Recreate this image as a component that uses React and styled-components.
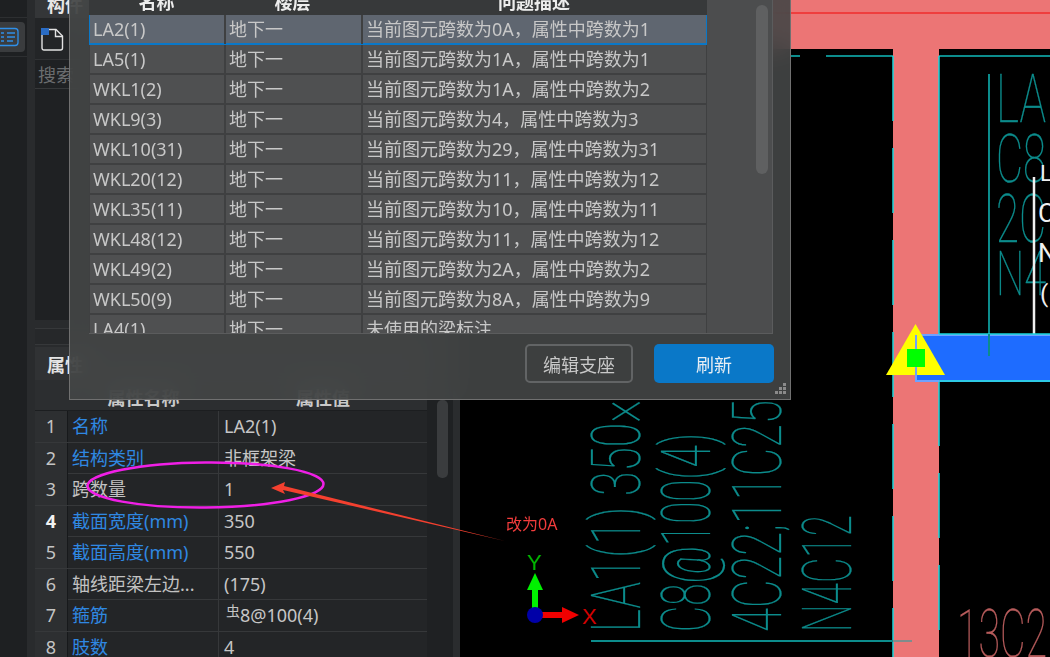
import React from 'react';
import styled, { createGlobalStyle } from 'styled-components';

const GlobalStyle = createGlobalStyle`
  html, body {
    margin: 0;
    padding: 0;
    background: #000;
  }
  body {
    font-family: "Noto Sans", "Noto Sans CJK SC", sans-serif;
    overflow: hidden;
  }
`;

const Screen = styled.div`
  position: relative;
  width: 1050px;
  height: 657px;
  overflow: hidden;
  display: flex;
  background: #000;
  filter: blur(0.4px);
`;

const Rail = styled.div`
  width: 27px;
  flex: none;
  background: #1e2022;
  border-right: 8px solid #292b2d;
  padding-top: 17px;
`;

const RailTile = styled.div`
  height: 38px;
  border-top: 1px solid #2d2f31;
  border-bottom: 1px solid #2d2f31;
  display: flex;
  align-items: center;
`;

const RailButton = styled.div`
  width: 25px;
  height: 30px;
  background: #3a3c3e;
  border-radius: 0 4px 4px 0;
  display: flex;
  align-items: center;
  color: #2f8fe8;
`;

const SideColumn = styled.div`
  width: 392px;
  flex: none;
  display: flex;
  flex-direction: column;
  background: #292b2d;
`;

const ComponentPanel = styled.div`
  height: 320px;
  flex: none;
  background: #1f2123;
  display: flex;
  flex-direction: column;
`;

const PanelTab = styled.div`
  height: 18px;
  background: #343638;
  color: #e6e6e6;
  font-size: 18px;
  font-weight: 700;
  line-height: 10px;
  padding-left: 12px;
  overflow: hidden;
`;

const PanelTools = styled.div`
  height: 42px;
  border-bottom: 1px solid #303234;
  padding: 10px 0 0 6px;
  box-sizing: border-box;
  background: #232527;
`;

const SearchRow = styled.div`
  height: 28px;
  padding-left: 3px;
  font-size: 18px;
  line-height: 30px;
  color: #6b6d6f;
  border-bottom: 1px solid #36383a;
`;

const PanelStrip = styled.div`
  height: 17px;
  margin-top: 8px;
  flex: none;
  background: #26282a;
  border-top: 1px solid #36383a;
  border-bottom: 1px solid #36383a;
  box-sizing: border-box;
`;

const PropsTitle = styled.div`
  height: 33px;
  margin-top: 2px;
  flex: none;
  background: #303234;
  color: #e4e4e4;
  font-size: 18px;
  font-weight: 700;
  line-height: 36px;
  padding-left: 12px;
`;

const PropsHead = styled.div`
  height: 31px;
  flex: none;
  display: grid;
  grid-template-columns: 33px 151px 208px;
  background: #2c2e30;
  color: #c9c9c9;
  font-size: 18px;
  font-weight: 700;
  text-align: center;
  line-height: 36px;
  box-sizing: border-box;
  border-bottom: 1px solid #1c1e20;
  overflow: hidden;
`;

const PropRow = styled.div`
  height: 31.5px;
  flex: none;
  display: grid;
  grid-template-columns: 33px 151px 208px;
  box-sizing: border-box;
  border-bottom: 1px solid #36383a;
  font-size: 18px;
  line-height: 31px;
  background: #232527;
`;

const PropIndex = styled.div`
  background: #2d2f31;
  border-right: 1px solid #17191b;
  text-align: center;
  color: ${(p) => (p.$strong ? '#f2f2f2' : '#c4c4c4')};
  font-weight: ${(p) => (p.$strong ? 700 : 400)};
`;

const PropName = styled.div`
  padding-left: 4px;
  border-right: 1px solid #36383a;
  color: ${(p) => (p.$blue ? '#2f88e2' : '#c2c2c2')};
  white-space: nowrap;
`;

const PropValue = styled.div`
  padding-left: 5px;
  color: #c6c6c6;
  white-space: nowrap;
`;

const RebarMark = styled.span`
  font-size: 14px;
  line-height: 0;
  vertical-align: 6px;
  margin-left: 2px;
`;

const Splitter = styled.div`
  width: 33px;
  flex: none;
  background: #1f2123;
  border-right: 7px solid #2a2c2e;
  box-sizing: border-box;
  position: relative;
`;

const PropScrollThumb = styled.div`
  position: absolute;
  top: 400px;
  left: 10px;
  width: 11px;
  height: 78px;
  border-radius: 5px;
  background: #3a3c3e;
`;

const Canvas = styled.div`
  flex: 1;
  position: relative;
  background: #000;
`;

const Drawing = styled.svg`
  position: absolute;
  left: -460px;
  top: 0;
  display: block;
`;

const Dialog = styled.div`
  position: absolute;
  left: 69px;
  top: 0;
  width: 722px;
  height: 400px;
  box-sizing: border-box;
  background: rgba(68, 70, 70, 0.9);
  backdrop-filter: blur(14px);
  border: 1px solid #707070;
  border-top: none;
  padding-left: 19px;
  display: flex;
  flex-direction: column;
`;

const TableFrame = styled.div`
  position: relative;
  width: 684px;
  height: 334px;
  flex: none;
  overflow: hidden;
  background: #4c4d4e;
  border-bottom: 1px solid #5b5c5d;
  border-right: 1px solid #5b5c5d;
  box-sizing: border-box;
`;

const Table = styled.div`
  width: 618px;
`;

const HeadRow = styled.div`
  height: 15px;
  display: grid;
  grid-template-columns: 135px 137px 346px;
  background: #37393a;
  color: #ededed;
  font-size: 18px;
  font-weight: 700;
  text-align: center;
  line-height: 4px;
  overflow: hidden;
`;

const Row = styled.div`
  height: 30px;
  display: grid;
  grid-template-columns: 134px 137px 345px;
  box-sizing: border-box;
  background: ${(p) => (p.$active ? '#5f6670' : '#4f5051')};
  border-bottom: ${(p) => (p.$active ? '2px solid #0a78c8' : '2px solid #3f4041')};
  border-right: ${(p) => (p.$active ? '1px solid #0a78c8' : '1px solid #3f4041')};
  border-left: ${(p) => (p.$active ? '1px solid #0a78c8' : '1px solid #3f4041')};
  color: #c8c8c8;
  font-size: 18px;
  line-height: 29px;
  white-space: nowrap;
`;

const Cell = styled.div`
  padding-left: 3px;
  border-left: ${(p) => (p.$first ? 'none' : '2px solid #3f4041')};
`;

const TableScroll = styled.div`
  position: absolute;
  left: 667px;
  top: 5px;
  width: 12px;
  height: 169px;
  border-radius: 6px;
  background: #5f6061;
`;

const DialogFooter = styled.div`
  display: flex;
  justify-content: flex-end;
  gap: 21px;
  padding: 10px 16px 0 0;
`;

const DialogButton = styled.button`
  width: ${(p) => (p.$primary ? 120 : 108)}px;
  height: 39px;
  box-sizing: border-box;
  border-radius: 5px;
  border: ${(p) => (p.$primary ? 'none' : '2px solid #626465')};
  background: ${(p) => (p.$primary ? '#0a78c8' : 'transparent')};
  color: ${(p) => (p.$primary ? '#e8eef4' : '#c8c8c8')};
  font-family: inherit;
  font-size: 18px;
  padding: 0;
`;

const Grip = styled.svg`
  position: absolute;
  right: 3px;
  bottom: 4px;
`;

const Markup = styled.svg`
  position: absolute;
  left: 0;
  top: 0;
  pointer-events: none;
`;

const MarkupLabel = styled.span`
  position: absolute;
  left: 506px;
  top: 514px;
  color: #f23c3c;
  font-size: 16px;
  line-height: 20px;
`;

const issues = [
  ['LA2(1)', '当前图元跨数为0A，属性中跨数为1'],
  ['LA5(1)', '当前图元跨数为1A，属性中跨数为1'],
  ['WKL1(2)', '当前图元跨数为1A，属性中跨数为2'],
  ['WKL9(3)', '当前图元跨数为4，属性中跨数为3'],
  ['WKL10(31)', '当前图元跨数为29，属性中跨数为31'],
  ['WKL20(12)', '当前图元跨数为11，属性中跨数为12'],
  ['WKL35(11)', '当前图元跨数为10，属性中跨数为11'],
  ['WKL48(12)', '当前图元跨数为11，属性中跨数为12'],
  ['WKL49(2)', '当前图元跨数为2A，属性中跨数为2'],
  ['WKL50(9)', '当前图元跨数为8A，属性中跨数为9'],
  ['LA4(1)', '未使用的梁标注'],
];

const props = [
  ['名称', 'LA2(1)', true],
  ['结构类别', '非框架梁', true],
  ['跨数量', '1', false],
  ['截面宽度(mm)', '350', true],
  ['截面高度(mm)', '550', true],
  ['轴线距梁左边...', '(175)', false],
  ['箍筋', <><RebarMark>虫</RebarMark>8@100(4)</>, true],
  ['肢数', '4', true],
];

const TEAL = '#0c8c8c';
const CYAN = '#19d6dc';

// CAD text, rotated a quarter turn and read from the bottom up
const CadLabel = ({ x, y, len, children }) => (
  <text
    transform={`translate(${x} ${y}) rotate(-90)`}
    textLength={len}
    lengthAdjust="spacingAndGlyphs"
    fontFamily="Roboto, sans-serif"
    fontWeight="100"
    fontSize="69"
    fill={TEAL}
    stroke={TEAL}
    strokeWidth="0.3"
  >
    {children}
  </text>
);

const CadFlat = ({ x, y, len, size = 66, color = TEAL, children }) => (
  <text
    x={x}
    y={y}
    textLength={len}
    lengthAdjust="spacingAndGlyphs"
    fontFamily="Roboto, sans-serif"
    fontWeight="100"
    fontSize={size}
    fill={color}
    stroke={color}
    strokeWidth="0.3"
  >
    {children}
  </text>
);

const CadDrawing = () => (
  <Drawing width="1050" height="657" viewBox="0 0 1050 657">
    {/* beam along the top and the column */}
    <rect x="460" y="0" width="590" height="49" fill="#ec7575" />
    <line x1="460" y1="13" x2="1050" y2="13" stroke="#f02c2c" strokeWidth="1.5" />
    <rect x="893" y="49" width="46" height="608" fill="#ec7575" />
    <line x1="939" y1="56" x2="1050" y2="56" stroke={TEAL} strokeWidth="2" />
    <line x1="791" y1="56" x2="800" y2="56" stroke={TEAL} strokeWidth="2" />
    <line x1="826" y1="56" x2="893" y2="56" stroke={TEAL} strokeWidth="2" />
    <line x1="893" y1="56" x2="893" y2="657" stroke={CYAN} strokeWidth="1.5" strokeDasharray="65 27" />
    <line x1="939" y1="56" x2="939" y2="334" stroke={CYAN} strokeWidth="1.5" />
    <line x1="939" y1="381" x2="939" y2="657" stroke={CYAN} strokeWidth="1.5" strokeDasharray="65 27" />

    {/* labels beside the column */}
    <line x1="989" y1="74" x2="989" y2="356" stroke={TEAL} strokeWidth="2" />
    <CadFlat x="996" y="122" len="50">LA</CadFlat>
    <CadFlat x="996" y="182" len="50">C8</CadFlat>
    <CadFlat x="996" y="242" len="50">2C</CadFlat>
    <CadFlat x="996" y="295" len="50" size="62">N4</CadFlat>
    <line x1="1034" y1="177" x2="1034" y2="334" stroke="#f0f0f0" strokeWidth="2.5" />
    <text x="1040" y="181" fontFamily="Roboto, sans-serif" fontSize="22" fill="#f0f0f0">L</text>
    <text x="1038" y="222" fontFamily="Roboto, sans-serif" fontSize="26" fill="#f0f0f0">C</text>
    <text x="1038" y="262" fontFamily="Roboto, sans-serif" fontSize="26" fill="#f0f0f0">N</text>
    <text x="1040" y="302" fontFamily="Roboto, sans-serif" fontSize="24" fill="#f0f0f0">(</text>

    {/* selected beam and its grip */}
    <rect x="916" y="335" width="140" height="46" fill="#1e6cff" stroke="#6ea2ff" strokeWidth="2" />
    <line x1="939" y1="334" x2="1050" y2="334" stroke={CYAN} strokeWidth="1.5" />
    <line x1="939" y1="381" x2="1050" y2="381" stroke={CYAN} strokeWidth="1.5" />
    <line x1="989" y1="334" x2="989" y2="356" stroke={TEAL} strokeWidth="2" />
    <polygon points="915.5,324 886,375 945,375" fill="#ffff00" />
    <line x1="916" y1="335" x2="916" y2="381" stroke="#6ea2ff" strokeWidth="2" />
    <rect x="907" y="349" width="18" height="18" fill="#00ff00" />

    {/* rotated rebar text */}
    <CadLabel x="640" y="632" len="232">LA1(1) 350×</CadLabel>
    <CadLabel x="710" y="632" len="199">C8@100(4)</CadLabel>
    <CadLabel x="781" y="632" len="232">4C22;11C25</CadLabel>
    <CadLabel x="851" y="632" len="117">N4C12</CadLabel>
    <line x1="591" y1="641" x2="893" y2="641" stroke={TEAL} strokeWidth="2" />
    <line x1="893" y1="641" x2="912" y2="641" stroke="#7f8c8c" strokeWidth="2" />
    <CadFlat x="957" y="657" len="90" size="66" color="#b85c5c">13C2</CadFlat>

    {/* axis marker */}
    <rect x="532" y="589" width="6" height="22" fill="#00f000" />
    <polygon points="535,573 527,590 543,590" fill="#00f000" />
    <rect x="540" y="612" width="22" height="6" fill="#f00000" />
    <polygon points="579,615 562,607 562,623" fill="#f00000" />
    <circle cx="535" cy="615" r="8" fill="#0000a8" />
    <text x="527" y="570" fontFamily="Liberation Sans, sans-serif" fontSize="22" fill="#00b400">Y</text>
    <text x="582" y="624" fontFamily="Liberation Sans, sans-serif" fontSize="22" fill="#d20000">X</text>
  </Drawing>
);

const App = () => (
  <>
    <GlobalStyle />
    <Screen>
      <Rail>
        <RailTile>
          <RailButton>
            <svg width="19" height="20" viewBox="0 0 19 20" fill="none" stroke="currentColor" strokeWidth="1.3">
              <path d="M0 1.5h15a3 3 0 0 1 3 3v11a3 3 0 0 1-3 3H0" />
              <path d="M1 6h3M7 6h8M1 10h3M7 10h8M1 14h3M7 14h6" />
            </svg>
          </RailButton>
        </RailTile>
      </Rail>

      <SideColumn>
        <ComponentPanel>
          <PanelTab>构件</PanelTab>
          <PanelTools>
            <svg width="23" height="23" viewBox="0 0 23 23" fill="none">
              <path d="M1 3.5a2 2 0 0 1 2-2h12l6.5 6.5v12a2 2 0 0 1-2 2H3a2 2 0 0 1-2-2z" stroke="#e2e2e2" strokeWidth="1.4" />
              <path d="M14.5 1.5v7h7" stroke="#e2e2e2" strokeWidth="1.4" />
              <rect x="0" y="0" width="8" height="7" fill="#2a6cc4" />
            </svg>
          </PanelTools>
          <SearchRow>搜索</SearchRow>
        </ComponentPanel>
        <PanelStrip />
        <PropsTitle>属性</PropsTitle>
        <PropsHead>
          <span />
          <span>属性名称</span>
          <span>属性值</span>
        </PropsHead>
        {props.map(([name, value, blue], i) => (
          <PropRow key={name}>
            <PropIndex $strong={i === 3}>{i + 1}</PropIndex>
            <PropName $blue={blue}>{name}</PropName>
            <PropValue>{value}</PropValue>
          </PropRow>
        ))}
      </SideColumn>

      <Splitter>
        <PropScrollThumb />
      </Splitter>

      <Canvas>
        <CadDrawing />
      </Canvas>

      <Dialog>
        <TableFrame>
          <Table>
            <HeadRow>
              <span>名称</span>
              <span>楼层</span>
              <span>问题描述</span>
            </HeadRow>
            {issues.map(([name, text], i) => (
              <Row key={name} $active={i === 0}>
                <Cell $first>{name}</Cell>
                <Cell>地下一</Cell>
                <Cell>{text}</Cell>
              </Row>
            ))}
          </Table>
          <TableScroll />
        </TableFrame>
        <DialogFooter>
          <DialogButton>编辑支座</DialogButton>
          <DialogButton $primary>刷新</DialogButton>
        </DialogFooter>
        <Grip width="12" height="12" viewBox="0 0 12 12" fill="#8a8a8a">
          <rect x="8" y="0" width="3" height="3" />
          <rect x="4" y="4" width="3" height="3" />
          <rect x="8" y="4" width="3" height="3" />
          <rect x="0" y="8" width="3" height="3" />
          <rect x="4" y="8" width="3" height="3" />
          <rect x="8" y="8" width="3" height="3" />
        </Grip>
      </Dialog>

      <Markup width="1050" height="657" viewBox="0 0 1050 657">
        <ellipse cx="205.5" cy="485" rx="118" ry="22.5" fill="none" stroke="#f01fe6" strokeWidth="2.5" transform="rotate(-0.5 205 485)" />
        <polygon points="271,488 285,482 284,486 505,541 283,490 285,494" fill="#f4402f" />
      </Markup>
      <MarkupLabel>改为0A</MarkupLabel>
    </Screen>
  </>
);

export default App;
